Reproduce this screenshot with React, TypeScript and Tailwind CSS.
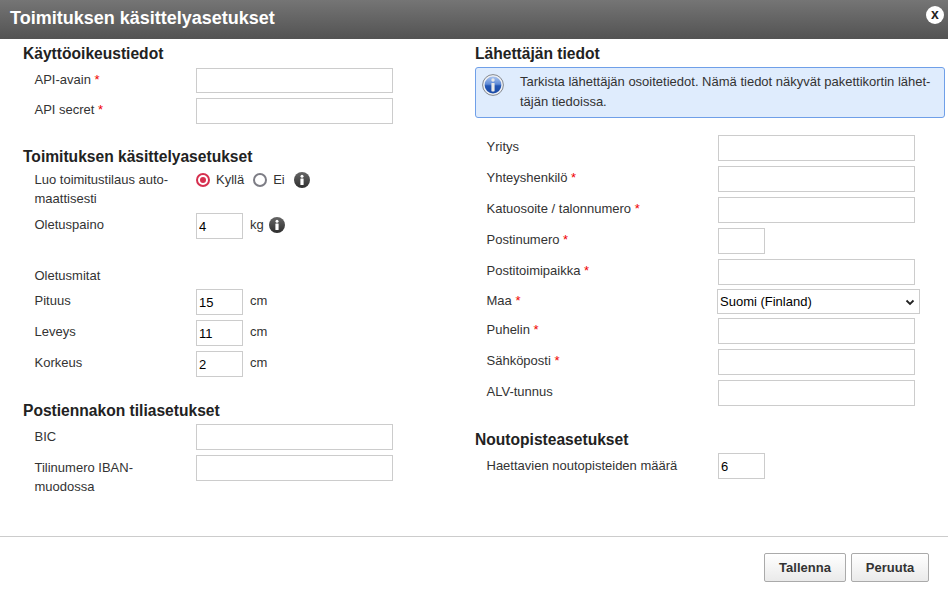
import { ReactNode } from 'react';

function Req() {
  return <span className="text-[#f00000]"> *</span>;
}

function Input({ value = '', small = false, className = 'h-[26px]' }: { value?: string; small?: boolean; className?: string }) {
  return (
    <input
      readOnly
      value={value}
      className={`${small ? 'w-[47px]' : 'w-[197px]'} ${className} shrink-0 border border-[#ccc] bg-white px-[2px] text-[13px] text-black outline-none`}
    />
  );
}

function Heading({ children, className = '' }: { children: ReactNode; className?: string }) {
  return <h2 className={`text-[15.6px] leading-[18px] font-bold text-[#222] ${className}`}>{children}</h2>;
}

function Row({
  label,
  children,
  className = '',
  labelClass = 'pt-[2px] leading-[20px]',
  right = false,
}: {
  label: ReactNode;
  children?: ReactNode;
  className?: string;
  labelClass?: string;
  right?: boolean;
}) {
  return (
    <div className={`flex items-start ${className}`}>
      <div className={`${right ? 'w-[243px]' : 'w-[173px]'} ${labelClass} shrink-0 pl-[11.5px] text-[13px] text-[#333]`}>
        {label}
      </div>
      {children}
    </div>
  );
}

function InfoDot() {
  return (
    <svg width="16" height="16" viewBox="0 0 16 16" className="shrink-0">
      <defs>
        <linearGradient id="dot" x1="0" y1="0" x2="0" y2="1">
          <stop offset="0" stopColor="#666" />
          <stop offset="1" stopColor="#2e2e2e" />
        </linearGradient>
      </defs>
      <circle cx="8" cy="8" r="8" fill="url(#dot)" />
      <circle cx="8" cy="4.3" r="1.5" fill="#fff" />
      <rect x="6.4" y="6.6" width="3.2" height="6.4" rx="0.5" fill="#fff" />
    </svg>
  );
}

function BlueInfo() {
  return (
    <svg width="22" height="22" viewBox="0 0 22 22" className="mt-[2px] shrink-0">
      <defs>
        <linearGradient id="blue" x1="0" y1="0" x2="0" y2="1">
          <stop offset="0" stopColor="#a9c4ef" />
          <stop offset="0.45" stopColor="#5f8ad6" />
          <stop offset="0.55" stopColor="#2456b4" />
          <stop offset="1" stopColor="#1a4aa6" />
        </linearGradient>
      </defs>
      <circle cx="11" cy="11" r="10.4" fill="#eef0f4" stroke="#84888f" strokeWidth="1" />
      <circle cx="11" cy="11" r="8.4" fill="url(#blue)" />
      <circle cx="11" cy="6" r="1.7" fill="#e8e8e8" />
      <rect x="9.4" y="9" width="3.2" height="8.4" rx="0.6" fill="#e8e8e8" />
    </svg>
  );
}

export default function App() {
  return (
    <div className="flex h-[596px] w-[948px] flex-col overflow-hidden bg-white font-['Liberation_Sans',Arial,sans-serif]">
      <header className="flex h-[39px] shrink-0 items-center justify-between bg-gradient-to-b from-[#757575] to-[#535353] pr-[4px] pl-[10px]">
        <h1 className="pb-[3px] text-[18px] font-bold text-white">Toimituksen käsittelyasetukset</h1>
        <div className="mb-[9px] flex h-[18px] w-[18px] items-center justify-center rounded-full bg-white pb-[2px] text-[14px] leading-none font-bold text-[#222]">
          x
        </div>
      </header>

      <main className="flex flex-1">
        <section className="w-[475px] shrink-0 pt-[6px] pl-[23px]">
          <Heading>Käyttöoikeustiedot</Heading>
          <Row label={<>API-avain<Req /></>} className="mt-[5px]">
            <Input className="h-[25px]" />
          </Row>
          <Row label={<>API secret<Req /></>} className="mt-[5px]">
            <Input />
          </Row>

          <Heading className="mt-[24px]">Toimituksen käsittelyasetukset</Heading>
          <div className="mt-[4px] flex items-start">
            <div className="w-[173px] shrink-0 pr-[20px] pl-[11.5px] text-[13px] leading-[19px] text-[#333]">
              Luo toimitustilaus auto-maattisesti
            </div>
            <div className="flex items-center text-[13px] leading-[19px] text-[#333]">
              <span className="flex h-[14px] w-[14px] items-center justify-center rounded-full border-2 border-[#d6304f] bg-white">
                <span className="h-[6px] w-[6px] rounded-full bg-[#d6304f]" />
              </span>
              <span className="ml-[6px]">Kyllä</span>
              <span className="ml-[9px] h-[14px] w-[14px] rounded-full border-2 border-[#7d7d85] bg-white" />
              <span className="ml-[6px]">Ei</span>
              <span className="ml-[9px]"><InfoDot /></span>
            </div>
          </div>
          <Row label="Oletuspaino" className="mt-[5px]">
            <Input value="4" small />
            <span className="ml-[7px] pt-[2px] text-[13px] leading-[20px] text-[#333]">kg</span>
            <span className="mt-[4px] ml-[5px]"><InfoDot /></span>
          </Row>

          <div className="mt-[27px] pl-[11.5px] text-[13px] leading-[20px] text-[#333]">Oletusmitat</div>
          <Row label="Pituus" className="mt-[3px]">
            <Input value="15" small />
            <span className="ml-[7px] pt-[2px] text-[13px] leading-[20px] text-[#333]">cm</span>
          </Row>
          <Row label="Leveys" className="mt-[5px]">
            <Input value="11" small />
            <span className="ml-[7px] pt-[2px] text-[13px] leading-[20px] text-[#333]">cm</span>
          </Row>
          <Row label="Korkeus" className="mt-[5px]">
            <Input value="2" small />
            <span className="ml-[7px] pt-[2px] text-[13px] leading-[20px] text-[#333]">cm</span>
          </Row>

          <Heading className="mt-[25px]">Postiennakon tiliasetukset</Heading>
          <Row label="BIC" className="mt-[4px]" labelClass="pt-[3px] leading-[20px]">
            <Input />
          </Row>
          <Row
            label={<span className="block w-[130px]">Tilinumero IBAN-muodossa</span>}
            className="mt-[5px]"
            labelClass="pt-[3px] leading-[19px]"
          >
            <Input />
          </Row>
        </section>

        <section className="w-[470px] shrink-0 pt-[6px]">
          <Heading>Lähettäjän tiedot</Heading>
          <div className="mt-[4px] flex h-[51px] rounded-[3px] border border-[#6f9fe8] bg-[#dfecfd] pt-[4px] pl-[6px] text-[13px] leading-[20px] text-[#333]">
            <BlueInfo />
            <p className="ml-[16px] w-[420px]">
              Tarkista lähettäjän osoitetiedot. Nämä tiedot näkyvät pakettikortin lähet-täjän tiedoissa.
            </p>
          </div>
          <Row right label="Yritys" className="mt-[17px]"><Input /></Row>
          <Row right label={<>Yhteyshenkilö<Req /></>} className="mt-[5px]"><Input /></Row>
          <Row right label={<>Katuosoite / talonnumero<Req /></>} className="mt-[5px]"><Input /></Row>
          <Row right label={<>Postinumero<Req /></>} className="mt-[5px]"><Input small /></Row>
          <Row right label={<>Postitoimipaikka<Req /></>} className="mt-[5px]"><Input /></Row>
          <Row right label={<>Maa<Req /></>} className="mt-[4px]">
            <div className="-ml-[1px] flex h-[25px] w-[203px] items-center justify-between border border-[#ccc] bg-white pr-[3px] pl-[2px] text-[13px] text-black">
              <span>Suomi (Finland)</span>
              <svg width="12" height="12" viewBox="0 0 12 12" fill="none" stroke="#222" strokeWidth="1.8">
                <path d="M2.5 4.5L6 8l3.5-3.5" />
              </svg>
            </div>
          </Row>
          <Row right label={<>Puhelin<Req /></>} className="mt-[4px]"><Input /></Row>
          <Row right label={<>Sähköposti<Req /></>} className="mt-[5px]"><Input /></Row>
          <Row right label="ALV-tunnus" className="mt-[5px]"><Input /></Row>

          <Heading className="mt-[25px]">Noutopisteasetukset</Heading>
          <Row right label="Haettavien noutopisteiden määrä" className="mt-[4px]" labelClass="pt-[3px] leading-[20px]">
            <Input value="6" small />
          </Row>
        </section>
      </main>

      <footer className="flex h-[60px] shrink-0 items-start justify-end gap-[5px] border-t border-[#ccc] pt-[16px] pr-[19px]">
        <button className="h-[29px] w-[82px] rounded-[2px] border border-[#aaa] bg-gradient-to-b from-white to-[#eaeaea] text-[13px] font-bold text-[#333]">
          Tallenna
        </button>
        <button className="h-[29px] w-[78px] rounded-[2px] border border-[#aaa] bg-gradient-to-b from-white to-[#eaeaea] text-[13px] font-bold text-[#333]">
          Peruuta
        </button>
      </footer>
    </div>
  );
}
